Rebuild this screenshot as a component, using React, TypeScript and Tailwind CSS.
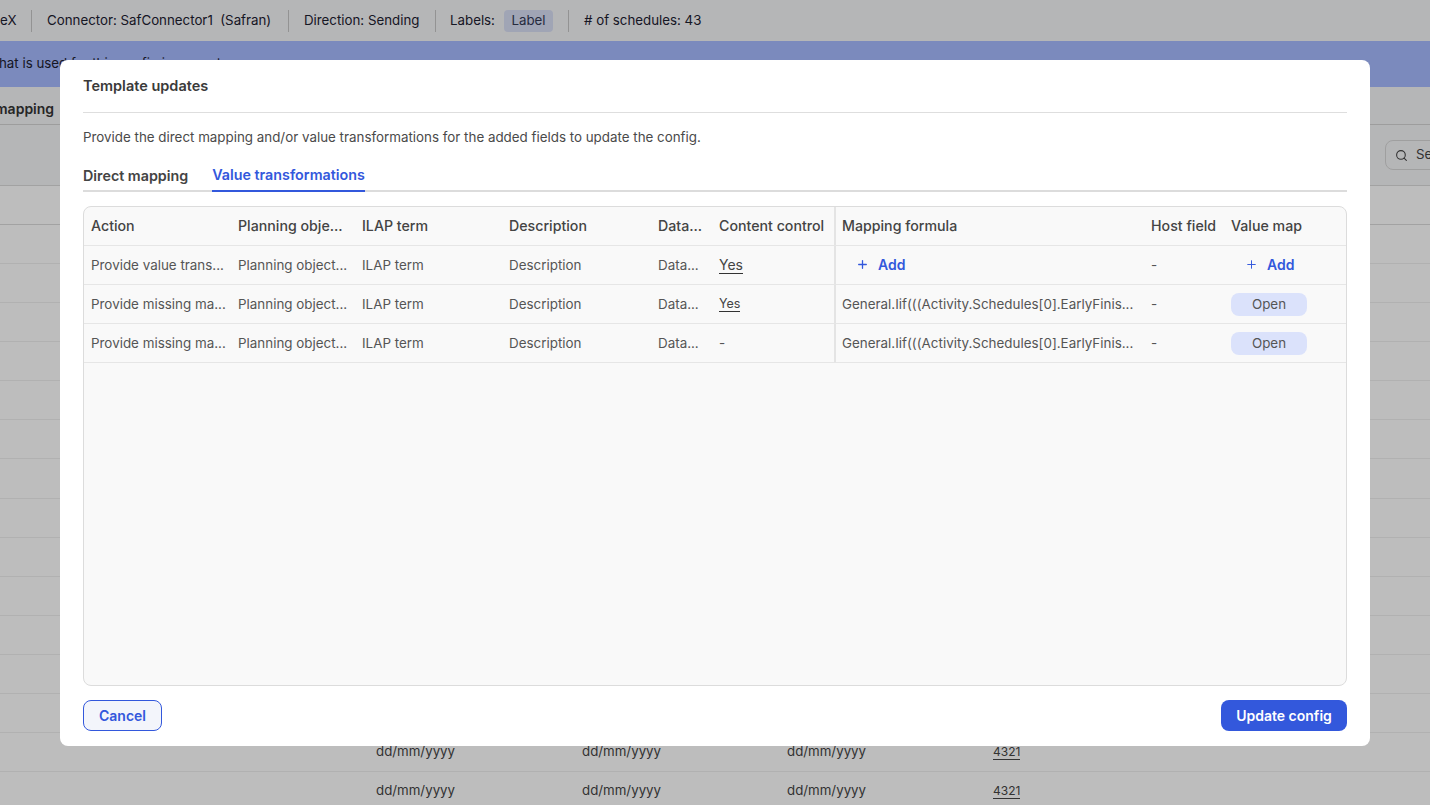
import { Plus, Search } from 'lucide-react';

const COLS = 'grid grid-cols-[147px_124px_147px_149px_61px_122px_310px_80px_1fr]';

function AddLink({ bold }: { bold?: boolean }) {
  return (
    <span className="flex items-center gap-[9px] pb-[1px] font-semibold text-[#3358dc] text-[14px]">
      <Plus className="h-[13px] w-[13px]" strokeWidth={bold ? 2.4 : 1.8} />
      Add
    </span>
  );
}

function OpenChip() {
  return (
    <span className="flex h-[23px] w-[76px] items-center justify-center rounded-lg bg-[#dbe2fb] text-[13.4px] text-[#555]">
      Open
    </span>
  );
}

function Cell({ children, divider, head }: { children: React.ReactNode; divider?: boolean; head?: boolean }) {
  return (
    <div className={`flex h-[39px] items-center overflow-hidden whitespace-nowrap border-b border-[#e6e6e6] px-[7px] ${head ? 'pb-[1px]' : ''} ${divider ? 'border-l-2 border-l-[#e4e4e4] pl-[6px]' : ''}`}>
      {children}
    </div>
  );
}

const headers = ['Action', 'Planning obje...', 'ILAP term', 'Description', 'Data...', 'Content control', 'Mapping formula', 'Host field', 'Value map'];

const rows = [
  {
    action: 'Provide value trans...',
    control: <span className="border-b border-[#333] text-[14px] leading-[16px] text-[#444]">Yes</span>,
    formula: <span className="pl-[14px]"><AddLink bold /></span>,
    valueMap: <span className="pl-[14px]"><AddLink /></span>,
  },
  {
    action: 'Provide missing ma...',
    control: <span className="border-b border-[#333] text-[12.5px] leading-[15px] text-[#444]">Yes</span>,
    formula: 'General.Iif(((Activity.Schedules[0].EarlyFinis...',
    valueMap: <OpenChip />,
  },
  {
    action: 'Provide missing ma...',
    control: '-',
    formula: 'General.Iif(((Activity.Schedules[0].EarlyFinis...',
    valueMap: <OpenChip />,
  },
];

function BackgroundPage() {
  return (
    <div className="flex flex-col text-[#1c2030] [font-family:Inter,sans-serif]">
      <div className="flex h-[41px] items-center bg-[#f2f3f5] pt-[1px] text-[13.3px]">
        <span className="w-[31px] pr-[15px] text-right">eX</span>
        <div className="flex h-[22px] w-[257px] items-center whitespace-nowrap border-l border-[#c4c4c4] px-[15px]">Connector: SafConnector1&nbsp; (Safran)</div>
        <div className="flex h-[22px] w-[147px] items-center whitespace-nowrap border-l border-[#c4c4c4] pl-[15px]">Direction: Sending</div>
        <div className="flex h-[22px] w-[133px] items-center whitespace-nowrap border-l border-[#c4c4c4] pl-[14px]">
          Labels:
          <span className="ml-[9px] flex h-[22px] w-[49px] items-center justify-center rounded bg-[#d6dcf2] text-[#333a55]">Label</span>
        </div>
        <div className="flex h-[22px] items-center whitespace-nowrap border-l border-[#c4c4c4] pl-[15px]"># of schedules: 43</div>
      </div>
      <div className="flex h-[46px] items-center overflow-hidden whitespace-nowrap bg-[#a4b8fc] pb-[1px] text-[13.3px]">
        <span className="-ml-[1px]">hat is used for this config is correct</span>
      </div>
      <div className="flex h-[38px] items-center overflow-hidden border-b border-[#d2d2d2] bg-[#f2f3f5] pt-[6px] text-[14px] font-semibold text-[#333]">
        <span className="-ml-[5px]">mapping</span>
      </div>
      <div className="flex h-[61px] items-center overflow-hidden border-b border-[#d8d8d8] bg-[#f2f3f5] pl-[1385px]">
        <div className="flex h-[30px] w-[120px] shrink-0 items-center gap-[8px] rounded-lg border border-[#d5d5d5] pl-[9px] text-[13.3px] text-[#444]">
          <Search className="h-[13px] w-[13px] shrink-0" />
          Search
        </div>
      </div>
      <div className="h-[39px] border-b border-[#d8d8d8] bg-[#fdfdfd]" />
      <div className="bg-[#fdfdfd] text-[13.3px] text-[#444]">
        {Array.from({ length: 15 }).map((_, i) => (
          <div key={i} className="flex h-[39.08px] items-center border-b border-[#ececec] pb-[1px] pl-[376px]">
            <span className="w-[206px]">dd/mm/yyyy</span>
            <span className="w-[205px]">dd/mm/yyyy</span>
            <span className="w-[206px]">dd/mm/yyyy</span>
            <span className="border-b border-[#444] text-[12px] leading-[15px]">4321</span>
          </div>
        ))}
      </div>
    </div>
  );
}

function TemplateModal() {
  return (
    <div className="absolute left-[60px] top-[60px] flex h-[686px] w-[1310px] flex-col rounded-lg bg-white px-[23px] pb-[15px] text-[#555] [font-family:Inter,sans-serif]">
      <div className="flex h-[53px] shrink-0 items-center border-b border-[#dedede] text-[14.5px] font-semibold text-[#3a3a3a]">
        Template updates
      </div>
      <p className="mt-[16px] h-[17px] shrink-0 text-[13.37px] leading-[17px] text-[#4a4a4a]">
        Provide the direct mapping and/or value transformations for the added fields to update the config.
      </p>
      <div className="mt-[15px] flex h-[31px] shrink-0 gap-[24px] border-b-2 border-[#dcdcdc] text-[14.3px] font-semibold">
        <span className="flex h-[31px] w-[105px] items-center whitespace-nowrap pb-[2px] text-[#444]">Direct mapping</span>
        <span className="flex h-[31px] w-[153px] items-center justify-center whitespace-nowrap border-b-2 border-[#3358dc] pb-[2px] text-[#3358dc]">Value transformations</span>
      </div>
      <div className="mt-[14px] min-h-0 flex-1 overflow-hidden rounded-lg border border-[#dcdcdc] bg-[#f9f9f9] text-[13.4px]">
        <div className={COLS}>
          {headers.map((h, i) => (
            <Cell key={h} head divider={i === 6}>
              <span className="text-[14.2px] font-medium text-[#444]">{h}</span>
            </Cell>
          ))}
        </div>
        {rows.map((r, i) => (
          <div key={i} className={COLS}>
            <Cell>{r.action}</Cell>
            <Cell>Planning object...</Cell>
            <Cell>ILAP term</Cell>
            <Cell>Description</Cell>
            <Cell>Data...</Cell>
            <Cell>{r.control}</Cell>
            <Cell divider>{r.formula}</Cell>
            <Cell>-</Cell>
            <Cell>{r.valueMap}</Cell>
          </div>
        ))}
      </div>
      <div className="mt-[14px] flex shrink-0 justify-between">
        <button className="h-[31px] w-[79px] rounded-lg border border-[#3358dc] bg-[#f3f5fb] text-[14px] font-semibold text-[#3358dc]">Cancel</button>
        <button className="h-[31px] w-[126px] rounded-lg bg-[#3358dc] text-[14px] font-semibold text-white">Update config</button>
      </div>
    </div>
  );
}

export default function App() {
  return (
    <div className="relative h-[805px] w-[1430px] overflow-hidden bg-[#fdfdfd]">
      <BackgroundPage />
      <div className="absolute inset-0 bg-black/25" />
      <TemplateModal />
    </div>
  );
}
